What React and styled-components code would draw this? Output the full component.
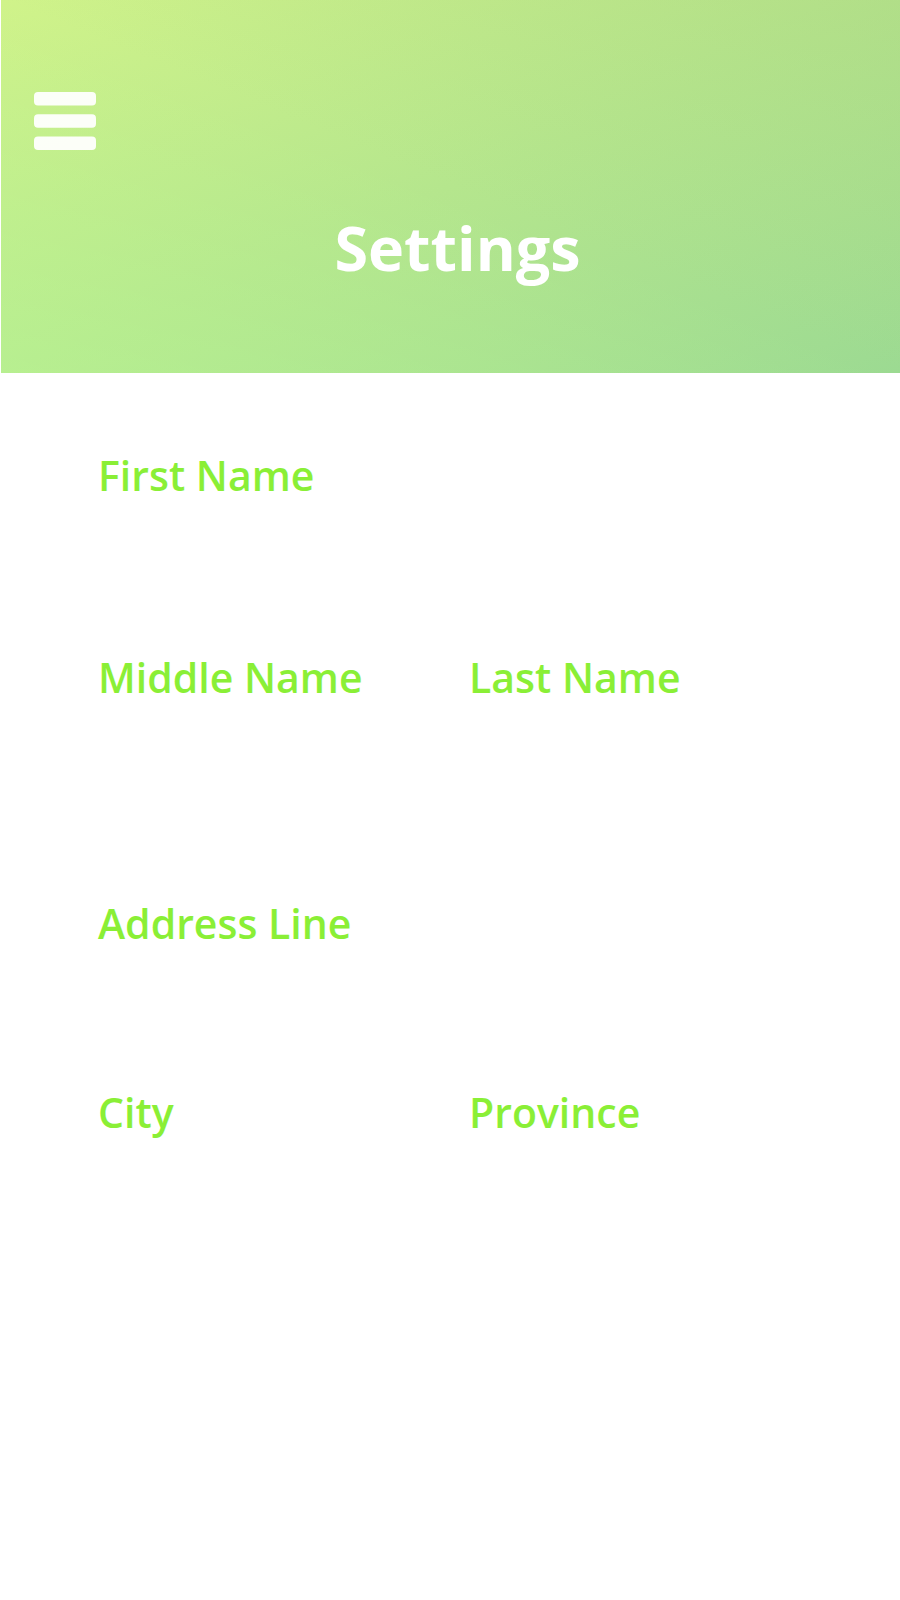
import React from 'react';
import styled, { createGlobalStyle } from 'styled-components';

const GlobalStyle = createGlobalStyle`
  * { box-sizing: border-box; }
  body { margin: 0; background: #fff; font-family: "Open Sans", sans-serif; }
`;
const Page = styled.div`
  min-height: 100vh;
  background: #fff;
`;
const Header = styled.header`
  min-height: 373px;
  margin-left: 1px;
  padding: 92px 33px 0;
  background:
    linear-gradient(to top right, rgba(188, 255, 150, 0.36) 0%, rgba(184, 232, 140, 0) 50%, rgba(168, 205, 125, 0.3) 100%),
    linear-gradient(to bottom right, #d0f38a 0%, #b5e68d 50%, #9cda92 100%);
`;
const MenuButton = styled.button`
  display: block;
  width: 62px;
  padding: 0;
  border: 0;
  background: none;
  cursor: pointer;
  svg { display: block; }
`;
const Title = styled.h1`
  margin: 58px 0 0;
  padding-left: 14px;
  text-align: center;
  font-size: 61px;
  line-height: 80px;
  font-weight: 700;
  color: #fff;
`;
const Form = styled.form`
  padding: 72px 98px 40px;
`;
const Row = styled.div`
  display: grid;
  grid-template-columns: 371fr 333fr;
  margin-bottom: ${({ $gap }) => $gap}px;
`;
const Field = styled.div`
  display: flex;
  flex-direction: column;
`;
const Label = styled.label`
  font-size: 41px;
  line-height: 60px;
  font-weight: 600;
  color: #8aef36;
  white-space: nowrap;
`;
const Input = styled.input`
  height: 60px;
  width: 100%;
  padding: 0;
  border: 0;
  outline: 0;
  background: transparent;
  font: inherit;
  font-size: 32px;
  color: #555;
`;
const rows = [
  { gap: 82, fields: [['firstName', 'First Name']] },
  { gap: 126, fields: [['middleName', 'Middle Name'], ['lastName', 'Last Name']] },
  { gap: 69, fields: [['address', 'Address Line']] },
  { gap: 0, fields: [['city', 'City'], ['province', 'Province']] },
];

export default function App() {
  return (
    <Page>
      <GlobalStyle />
      <Header>
        <MenuButton type="button" aria-label="Menu">
          <svg width="62" height="58" viewBox="0 0 62 58" fill="#fff" fillOpacity="0.94">
            <rect width="62" height="13.5" rx="4" />
            <rect y="22.2" width="62" height="13.5" rx="4" />
            <rect y="44.4" width="62" height="13.5" rx="4" />
          </svg>
        </MenuButton>
        <Title>Settings</Title>
      </Header>
      <Form>
        {rows.map(({ gap, fields }) => (
          <Row key={fields[0][0]} $gap={gap}>
            {fields.map(([id, label]) => (
              <Field key={id}>
                <Label htmlFor={id}>{label}</Label>
                <Input id={id} type="text" />
              </Field>
            ))}
          </Row>
        ))}
      </Form>
    </Page>
  );
}
